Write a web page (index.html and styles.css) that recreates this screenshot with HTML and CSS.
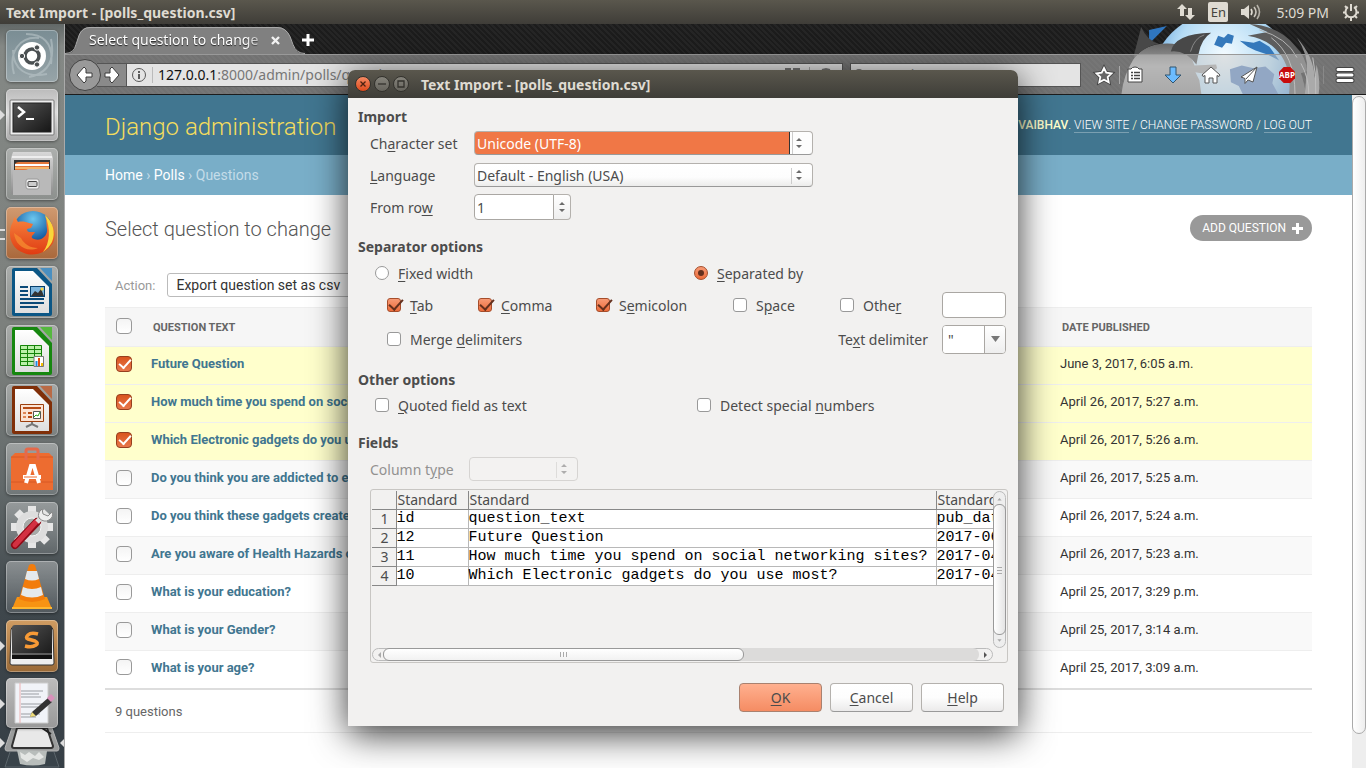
FILE: index.html
```html
<!DOCTYPE html>
<html lang="en">
<head>
<meta charset="utf-8">
<title>Text Import - [polls_question.csv]</title>
<link rel="stylesheet" href="styles.css">
</head>
<body>
<svg class="defs" width="0" height="0" aria-hidden="true">
  <defs>
    <linearGradient id="orange" x1="0" y1="0" x2="0" y2="1"><stop offset="0" stop-color="#f7853f"/><stop offset="1" stop-color="#df3b12"/></linearGradient>
    <linearGradient id="silver" x1="0" y1="0" x2="0" y2="1"><stop offset="0" stop-color="#d8d8d8"/><stop offset="1" stop-color="#8f8f8f"/></linearGradient>
    <linearGradient id="dark" x1="0" y1="0" x2="1" y2="1"><stop offset="0" stop-color="#555"/><stop offset="1" stop-color="#161616"/></linearGradient>
    <linearGradient id="paper" x1="0" y1="0" x2="0" y2="1"><stop offset="0" stop-color="#fff"/><stop offset="1" stop-color="#dedede"/></linearGradient>
    <radialGradient id="globe" cx=".5" cy=".3" r=".7"><stop offset="0" stop-color="#f4fbff"/><stop offset=".45" stop-color="#b5dcf5"/><stop offset="1" stop-color="#1e6fc0"/></radialGradient>
    <linearGradient id="fur" x1="0" y1="0" x2="0" y2="1"><stop offset="0" stop-color="#666"/><stop offset=".45" stop-color="#a5a5a5"/><stop offset="1" stop-color="#8a8a8a"/></linearGradient>
    <radialGradient id="sea" cx=".5" cy=".2" r=".8"><stop offset="0" stop-color="#6cc7ef"/><stop offset=".6" stop-color="#1c64a8"/><stop offset="1" stop-color="#0b2450"/></radialGradient>
    <symbol id="spin" viewBox="0 0 8 14"><path d="M4 2 7 5H1zM4 12 1 9h6z" fill="#6b6b6b"/></symbol>
  </defs>
</svg>

<div class="desktop">
  <header class="panel">
    <span class="panel-title">Text Import - [polls_question.csv]</span>
    <div class="indicators">
      <svg width="18" height="16" viewBox="0 0 18 16" fill="#dfdbd2"><path d="M5 0 10 5H7v7H3V5H0zM13 16 8 11h3V4h4v7h3z"/></svg>
      <span class="lang">En</span>
      <svg width="20" height="16" viewBox="0 0 20 16"><path d="M0 5h3l5-4v14l-5-4H0z" fill="#dfdbd2"/><g fill="none" stroke="#dfdbd2" stroke-width="1.600"><path d="M10 5q2 3 0 6"/><path d="M13 3q4 5 0 10" opacity=".85"/><path d="M16 1q5 7 0 14" opacity=".7"/></g></svg>
      <span class="clock">5:09 PM</span>
      <svg width="18" height="18" viewBox="0 0 18 18" fill="none" stroke="#dfdbd2"><path d="M6 4.200a5.500 5.500 0 1 0 6 0" stroke-width="2"/><path d="M9 1v7" stroke-width="2"/><path d="M3 3l2 2M15 3l-2 2M1 9.500h3M14 9.500h3M3 15l2-2M15 15l-2-2M9 15v3" stroke-width="2"/></svg>
    </div>
  </header>

  <div class="workspace">
    <nav class="launcher" aria-label="Launcher">
      <button class="tile dash" aria-label="Dash"><svg viewBox="0 0 52 52"><g fill="none" stroke="#b9c4c8" opacity=".6"><path d="M8 44C2 22 14 6 33 8M45 9c4 20-2 34-22 38M20 4c16 0 28 8 25 30M7 20c0 20 14 28 34 24" stroke-width="2"/></g><circle cx="26" cy="26" r="14" fill="#fff"/><circle cx="26" cy="26" r="7" fill="none" stroke="#4b5052" stroke-width="3.500"/><g fill="#4b5052" stroke="#fff"><circle cx="16" cy="26" r="2.700"/><circle cx="31" cy="17.500" r="2.700"/><circle cx="31" cy="34.500" r="2.700"/></g></svg></button>
      <button class="tile light run" aria-label="Terminal"><svg viewBox="0 0 52 52"><rect x="4" y="11" width="44" height="35" rx="1" fill="#eee" stroke="#777"/><rect x="7" y="14" width="38" height="29" fill="url(#dark)" stroke="#222"/><path d="m12 18 6 5-6 5" fill="none" stroke="#fff" stroke-width="2.500"/><path d="M20 30h8" stroke="#fff" stroke-width="2"/></svg></button>
      <button class="tile" aria-label="Files"><svg viewBox="0 0 52 52"><path d="M7 4h38l2 6v36H5V10z" fill="url(#silver)"/><path d="M6 9h40" stroke="#eee" stroke-width="2"/><path d="M8 12h36v12H8z" fill="#333"/><path d="M9 16q1-2 4-2h30v9H9z" fill="#e4773a"/><path d="M9 17h34" stroke="#fff" stroke-width="2"/><path d="M9 20h34" stroke="#f4b56a" stroke-width="2"/><path d="M7 22h11q3 0 4-1h23v26H7z" fill="#b9b9b9"/><rect x="20" y="31" width="13" height="10" rx="2" fill="#eee" stroke="#999"/><rect x="22" y="33.500" width="9" height="5" rx="1" fill="#ccc" stroke="#444"/></svg></button>
      <button class="tile fox multi" aria-label="Firefox"><svg viewBox="0 0 52 52"><circle cx="27" cy="24" r="20" fill="url(#sea)"/><path d="M8 10c2 1 3 3 4 5 4-1 8 0 11 1l4 1-2 4-4 1c0 4 3 3 8 3-1 3-4 3-3 6 8 5 16-2 15-9-1-8 0-8-2-13 9 7 12 18 8 27C41 46 28 50 18 46 5 42 2 29 5 19c1-3 3-5 3-9z" fill="url(#orange)"/><path d="M39 8c8 7 11 18 7 27-2 4-5 7-9 10 7-9 8-23 2-37z" fill="#f9d63a"/><path d="M8 26c1 12 12 20 24 15-8 0-14-4-17-10z" fill="#f58a2f" opacity=".8"/></svg></button>
      <button class="tile" aria-label="LibreOffice Writer"><svg viewBox="0 0 52 52"><path d="M8 2h23l15 16v30q0 2-2 2H8q-2 0-2-2V4q0-2 2-2z" fill="#0b5685"/><path d="M34 2h12v13z" fill="#4a8fc0"/><path d="M9 5h18l16 16v26H9z" fill="url(#paper)"/><path d="M14 21h8M14 25h8M14 29h8M14 33h24M14 37h24M14 41h18" stroke="#0b4a78" stroke-width="2"/><rect x="24.500" y="20.500" width="14" height="10" fill="#7cb5dd" stroke="#06406d"/><path d="m25 30 4-5 3 2 3-4 3 7z" fill="#333"/><circle cx="36" cy="23" r="1.500" fill="#ffd83c"/></svg></button>
      <button class="tile" aria-label="LibreOffice Calc"><svg viewBox="0 0 52 52"><path d="M8 2h23l15 16v30q0 2-2 2H8q-2 0-2-2V4q0-2 2-2z" fill="#16870f"/><path d="M34 2h12v13z" fill="#55b83e"/><path d="M9 5h18l16 16v26H9z" fill="url(#paper)"/><path d="M14 20h22v21H14z" fill="#baf0a8"/><path d="M14.500 20.500h21v20h-21zM14 24.500h22M14 28.500h22M14 32.500h22M14 36.500h22M21.500 20v21M28.500 20v21" fill="none" stroke="#148309"/><path d="M28 31.500h9.500v10H28z" fill="#fff" stroke="#777"/><path d="M30.500 36v5" stroke="#208be0" stroke-width="2"/><path d="M33 33v8" stroke="#e24e0d" stroke-width="2"/><path d="M36 38v3" stroke="#f4be00" stroke-width="2"/></svg></button>
      <button class="tile" aria-label="LibreOffice Impress"><svg viewBox="0 0 52 52"><path d="M8 2h23l15 16v30q0 2-2 2H8q-2 0-2-2V4q0-2 2-2z" fill="#802f08"/><path d="M34 2h12v13z" fill="#b96a45"/><path d="M9 5h18l16 16v26H9z" fill="url(#paper)"/><path d="M14.500 20.500h23v17h-23z" fill="#fbe3d4" stroke="#9c3f0d"/><path d="M17 24h18M22 29h4M22 33h4" stroke="#b64b16" stroke-width="2"/><path d="M17 29h3M17 33h3" stroke="#df8655" stroke-width="2"/><path d="M27.500 27.500h7v7h-7z" fill="#fff" stroke="#555"/><path d="m28 33 2-2 2 1 2-4" fill="none" stroke="#23a312"/><path d="M26 38v3m-6 2 6-3 6 3" fill="none" stroke="#777" stroke-width="2"/></svg></button>
      <button class="tile" aria-label="Software Center"><svg viewBox="0 0 52 52"><path d="m5 14 4-4h34l4 4v33H5z" fill="#ed6c30"/><path d="M5 14h42M5 39h42" stroke="#c94b1c" opacity=".6"/><path d="M20 17V8q0-2 2-2h8q2 0 2 2v9" fill="none" stroke="#e5694a" stroke-width="3"/><path d="m20 40 5-17h3l5 17" fill="none" stroke="#fff" stroke-width="4"/><path d="M17 34h18" stroke="#fff" stroke-width="4"/><path d="M18 34h13" stroke="#ed6c30"/></svg></button>
      <button class="tile" aria-label="System Settings"><svg viewBox="0 0 52 52"><g stroke="#e6e6e6" stroke-width="8"><path d="M26 4v42M5 25h42M11 10l30 30M41 10 11 40"/></g><circle cx="26" cy="25" r="16" fill="#ddd"/><circle cx="26" cy="25" r="9" fill="#a7aaa8" stroke="#f5f5f5"/><path d="m9 43 22-23" stroke="#8f0a16" stroke-width="8" stroke-linecap="round"/><path d="m9 43 21-23" stroke="#d33142" stroke-width="5" stroke-linecap="round"/><path d="m31 20 5-5" stroke="#ddd" stroke-width="5"/><path d="M36 7q-5 4-3 9 5 5 10 2 5-3 3-8l-4 4-5-2z" fill="#eee" stroke="#888"/></svg></button>
      <button class="tile" aria-label="VLC"><svg viewBox="0 0 52 52"><path d="M11 36h30l5 12H6z" fill="#f79313"/><path d="M6 47h40" stroke="#ffb72f" stroke-width="2"/><path d="M23 4q3-2 6 0l10 34q-13 6-26 0z" fill="#f27c0c"/><path d="m21 10-2 8q7 3 14 0l-2-8zM17 26l-2 8q11 5 22 0l-2-8q-9 4-18 0z" fill="#e5e9ec"/></svg></button>
      <button class="tile sublime run" aria-label="Sublime Text"><svg viewBox="0 0 52 52"><path d="M5 10q0-3 3-3h36q3 0 3 3l1 33q0 2-2 2H6q-2 0-2-2z" fill="#eee" stroke="#333"/><path d="M9 5h34q3 0 3 3v31H6V8q0-3 3-3z" fill="url(#dark)"/><path d="M6 35h40v4H6z" fill="#111"/><path d="M6 34h40" stroke="#999"/><path d="M32 14q-7-2-10 1-3 3 0 4l7 2q4 2 1 4-4 3-11 1" fill="none" stroke="#f79a36" stroke-width="3.500"/></svg></button>
      <button class="tile light note run" aria-label="Text Editor"><svg viewBox="0 0 52 50"><path d="M9 5h33v40H9z" fill="#f1f3f8" stroke="#ccc"/><path d="M14 5v40" stroke="#edb2b2"/><path d="M15 13h22M15 16h18M15 19h20M15 26h21M15 29h17M15 36h19M15 39h15" stroke="#9a9da3"/><path d="m26 34 16-14 4 4-16 14-6 1z" fill="#333"/><path d="m24 39 2-5 4 4z" fill="#efdc79"/><path d="m41 20 4-4 4 4-4 4z" fill="#d990bb"/></svg></button>
      <button class="tile trash run" aria-label="Workspaces and Trash"><svg viewBox="0 0 56 42"><path d="M8 0h40l7 20q0 3-2 3H3q-2 0-2-3z" fill="#9a9c9c" stroke="#b5b5b5"/><path d="M13 0h30l6 18q0 2-2 2H10q-2 0-2-2z" fill="#e8e8e8" stroke="#333" stroke-width="2"/><path d="m38 0 9 6" stroke="#222" stroke-width="2"/><path d="m6 24-5 15h54l-5-15" fill="#39434a" stroke="#5b656b"/><path d="m13 22 30 1-2 13q-12 3-25 0z" fill="#b8bdbb"/><path d="m16 24 5 3 4-3 6 4 4-4 5 5-5 3-6-2-6 4-6-4z" fill="#e4e6e4"/></svg></button>
    </nav>

    <main class="browser">
      <div class="chrome">
        <svg class="persona" viewBox="0 0 210 71" aria-hidden="true">
          <circle cx="104" cy="62" r="75" fill="url(#globe)"/>
          <path d="m28 20 18-18-18 4z" fill="#2f76c0"/>
          <path d="m98 12 6 2 4-4 6 2-2 8-6-1-4 5-8-3zM120 17l14 2 6-2 10 6 10 14-12-6-12-4-8-4z" fill="#3478bb"/>
          <path d="m110 46 12-4 12 3 12-2 9 8-2 9 6 11h-36l-4-8-8-4z" fill="#5c86c0"/>
          <path d="M12 36Q24 18 52 20q10 2 18 12l4 10 22-1 1 4-10 6-12-2 4 8 2 14H0Q2 52 12 36z" fill="url(#fur)"/>
          <path d="M13 30 20 3q6 14 18 17-14 2-25 14zM50 28q4-18 41-19-10 6-13 22l-2 10Q64 26 50 28z" fill="#484848"/>
          <path d="M70 28q4-14 14-17" fill="none" stroke="#888"/>
          <path d="m128 12 20-4-18-8q30 2 46 22 12 12 12 26l-6 2q4 12 5 21h-17q3-30-14-46-10-10-28-13z" fill="#5d5d5d"/>
          <path d="M178 14q12 18 10 34l-2 23h14q2-12-2-30l-2 14q-1-22-18-41z" fill="#8d8d8d"/>
          <path d="M140 6q28 8 38 28M152 14q24 18 24 57M182 40q8 14 8 31M194 34q4 18 3 37" fill="none" stroke="#b5b5b5"/>
        </svg>
        <div class="tabs">
          <div class="tab">
            <svg class="tab-shape" viewBox="0 0 240 30" preserveAspectRatio="none"><path d="M0 30q9 0 11-9l3-10Q17 3 25 3h187q9 0 13 9l3 9q3 9 12 9z" fill="#808080"/><path d="M0 29.500q9 0 11-9l3-9Q17 3.500 25 3.500h187q9 0 13 9l3 8q3 9 12 9" fill="none" stroke="#aaa"/></svg>
            <span class="tab-label">Select question to change</span>
            <button class="tab-close" aria-label="Close tab"><svg width="9" height="9" viewBox="0 0 9 9"><path d="m1 1 7 7M8 1 1 8" stroke="#f2f2f2" stroke-width="2.400"/></svg></button>
          </div>
          <button class="new-tab" aria-label="New tab"><svg width="14" height="14" viewBox="0 0 14 14"><path d="M7 1v12M1 7h12" stroke="#fff" stroke-width="3"/></svg></button>
        </div>
        <div class="toolbar">
          <button class="back" aria-label="Back"><svg width="18" height="18" viewBox="0 0 18 18"><path d="M8 1 1 9l7 8 2-2v-4h6V7h-6V3z" fill="#fff" stroke="#3a3a3a"/></svg></button>
          <button class="forward" aria-label="Forward"><svg width="16" height="18" viewBox="0 0 16 18"><path d="m8 1 7 8-7 8-2-2v-4H1V7h5V3z" fill="#fff" stroke="#3a3a3a"/></svg></button>
          <div class="urlbar">
            <svg width="16" height="16" viewBox="0 0 16 16"><circle cx="8" cy="8" r="6.500" fill="none" stroke="#5a5a5a"/><path d="M8 7v5M8 4v2" stroke="#5a5a5a" stroke-width="2"/></svg>
            <span class="url"><b>127.0.0.1</b>:8000/admin/polls/question/</span>
            <svg class="reader" width="56" height="16" viewBox="0 0 56 16" fill="none" stroke="#777" stroke-width="2"><path d="M1 2h6M9 2h7M38 3l4-1 4 1"/><path d="M25.500 0v14" stroke="#aaa" stroke-width="1"/></svg>
          </div>
          <label class="search"><svg width="14" height="14" viewBox="0 0 14 14"><circle cx="6" cy="6" r="4" fill="none" stroke="#777" stroke-width="2"/></svg><input type="text" placeholder="Search" aria-label="Search"></label>
          <div class="tools">
            <button aria-label="Bookmark"><svg viewBox="0 0 24 24"><path d="m12 5 2.300 4.700 5.200.7-3.800 3.600 1 5.200-4.700-2.500-4.700 2.500 1-5.200-3.800-3.600 5.200-.7z" fill="#666" stroke="#444" stroke-width="3.600"/><path d="m12 5 2.300 4.700 5.200.7-3.800 3.600 1 5.200-4.700-2.500-4.700 2.500 1-5.200-3.800-3.600 5.200-.7z" fill="#666" stroke="#fff" stroke-width="1.800"/></svg></button>
            <i class="sep"></i>
            <button aria-label="Library"><svg viewBox="0 0 24 24"><path d="M5 6h3q1-2 4-2t4 2h3v13H5z" fill="#fff" stroke="#444"/><path d="M8 9.500h2m1 0h6M8 12.500h2m1 0h6M8 15.500h2m1 0h6" stroke="#444" stroke-width="1.600"/></svg></button>
            <button aria-label="Downloads"><svg viewBox="0 0 24 24"><path d="M9 4h6v8h5l-8 8-8-8h5z" fill="#6cbcff" stroke="#31546f"/></svg></button>
            <button aria-label="Home"><svg viewBox="0 0 24 24"><path d="m12 4 9 8-1 1.500-2-1V20h-4v-5h-4v5H6v-7.500l-2 1L3 12z" fill="#fff" stroke="#555"/></svg></button>
            <button aria-label="Send"><svg viewBox="0 0 24 24"><path d="M20 4 4 14l4 1.500v5l3-3.500 5 2z" fill="#fff" stroke="#555"/><path d="M20 4 9 16" stroke="#555"/></svg></button>
            <button aria-label="Adblock Plus"><svg viewBox="0 0 24 24"><path d="M8.700 4h6.600L20 8.700v6.600L15.300 20H8.700L4 15.300V8.700z" fill="#c70d0d"/><text x="12" y="15" text-anchor="middle" class="abp">ABP</text></svg></button>
            <i class="sep end"></i>
            <button aria-label="Menu"><svg viewBox="0 0 24 24"><path d="M5 6.500h14M5 12h14M5 17.500h14" stroke="#444" stroke-width="5" stroke-linecap="round"/><path d="M5 6.500h14M5 12h14M5 17.500h14" stroke="#fff" stroke-width="3" stroke-linecap="round"/></svg></button>
          </div>
        </div>
      </div>

      <div class="viewport">
        <div class="page">
          <div class="site-header">
            <h1>Django administration</h1>
            <div class="user-tools">WELCOME, <strong>VAIBHAV</strong>. <a href="#site">VIEW SITE</a> / <a href="#password">CHANGE PASSWORD</a> / <a href="#logout">LOG OUT</a></div>
          </div>
          <div class="breadcrumbs"><a href="#home">Home</a> › <a href="#polls">Polls</a> › Questions</div>
          <div class="content">
            <div class="title-row"><h2>Select question to change</h2><a class="add" href="#add">ADD QUESTION <svg width="11" height="11" viewBox="0 0 11 11"><path d="M5.500 0v11M0 5.500h11" stroke="#fff" stroke-width="3"/></svg></a></div>
            <div class="actions"><label for="action">Action:</label><select id="action"><option>Export question set as csv</option></select></div>
            <table class="results">
              <thead><tr><th class="pick"><input type="checkbox" aria-label="Select all"></th><th>QUESTION TEXT</th><th class="date">DATE PUBLISHED</th></tr></thead>
              <tbody>
                <tr class="selected"><td><input type="checkbox" checked aria-label="Select Future Question"></td><td><a href="#q">Future Question</a></td><td>June 3, 2017, 6:05 a.m.</td></tr>
                <tr class="selected"><td><input type="checkbox" checked aria-label="Select networking question"></td><td><a href="#q">How much time you spend on social networking sites?</a></td><td>April 26, 2017, 5:27 a.m.</td></tr>
                <tr class="selected"><td><input type="checkbox" checked aria-label="Select gadgets question"></td><td><a href="#q">Which Electronic gadgets do you use most?</a></td><td>April 26, 2017, 5:26 a.m.</td></tr>
                <tr><td><input type="checkbox" aria-label="Select addiction question"></td><td><a href="#q">Do you think you are addicted to electronic gadgets?</a></td><td>April 26, 2017, 5:25 a.m.</td></tr>
                <tr><td><input type="checkbox" aria-label="Select effects question"></td><td><a href="#q">Do you think these gadgets create problems?</a></td><td>April 26, 2017, 5:24 a.m.</td></tr>
                <tr><td><input type="checkbox" aria-label="Select hazards question"></td><td><a href="#q">Are you aware of Health Hazards of gadgets?</a></td><td>April 26, 2017, 5:23 a.m.</td></tr>
                <tr><td><input type="checkbox" aria-label="Select education question"></td><td><a href="#q">What is your education?</a></td><td>April 25, 2017, 3:29 p.m.</td></tr>
                <tr><td><input type="checkbox" aria-label="Select gender question"></td><td><a href="#q">What is your Gender?</a></td><td>April 25, 2017, 3:14 a.m.</td></tr>
                <tr><td><input type="checkbox" aria-label="Select age question"></td><td><a href="#q">What is your age?</a></td><td>April 25, 2017, 3:09 a.m.</td></tr>
              </tbody>
            </table>
            <p class="paginator">9 questions</p>
          </div>
        </div>
        <div class="page-scroll"><div class="page-thumb"></div></div>
      </div>
    </main>
  </div>

  <section class="dialog" role="dialog" aria-labelledby="dlg-title">
    <header class="dlg-bar">
      <button class="win close" aria-label="Close"><svg width="8" height="8" viewBox="0 0 8 8"><path d="m1.500 1.500 5 5M6.500 1.500l-5 5" stroke="#4b2110" stroke-width="1.300"/></svg></button>
      <button class="win" aria-label="Minimize"><svg width="8" height="8" viewBox="0 0 8 8"><path d="M0 4h8" stroke="#33322d" stroke-width="1.300"/></svg></button>
      <button class="win" aria-label="Maximize"><svg width="8" height="8" viewBox="0 0 8 8"><path d="M1 1h6v6H1z" fill="none" stroke="#33322d" stroke-width="1.300"/></svg></button>
      <h2 id="dlg-title">Text Import - [polls_question.csv]</h2>
    </header>
    <form class="dlg-body">
      <section>
        <h3>Import</h3>
        <div class="rows">
          <div class="row"><label class="field" for="charset">Ch<u>a</u>racter set</label><span class="combo wide"><select id="charset" class="focused"><option>Unicode (UTF-8)</option></select><svg width="8" height="14"><use href="#spin"/></svg></span></div>
          <div class="row"><label class="field" for="language"><u>L</u>anguage</label><span class="combo wide"><select id="language"><option>Default - English (USA)</option></select><svg width="8" height="14"><use href="#spin"/></svg></span></div>
          <div class="row"><label class="field" for="fromrow">From ro<u>w</u></label><span class="spinner"><input id="fromrow" type="text" value="1"><button type="button" aria-label="Change row"><svg width="8" height="14"><use href="#spin"/></svg></button></span></div>
        </div>
      </section>
      <section>
        <h3>Separator options</h3>
        <div class="rows">
          <div class="row modes"><label><input type="radio" name="mode"><span><u>F</u>ixed width</span></label><label><input type="radio" name="mode" checked><span><u>S</u>eparated by</span></label></div>
          <div class="row seps">
            <label><input type="checkbox" checked><span><u>T</u>ab</span></label>
            <label><input type="checkbox" checked><span><u>C</u>omma</span></label>
            <label><input type="checkbox" checked><span>S<u>e</u>micolon</span></label>
            <label><input type="checkbox"><span>S<u>p</u>ace</span></label>
            <label><input type="checkbox"><span>Othe<u>r</u></span></label>
            <input class="other" type="text" aria-label="Other separator">
          </div>
          <div class="row delim">
            <label><input type="checkbox"><span>Merge <u>d</u>elimiters</span></label>
            <label class="delim-label" for="delim">Te<u>x</u>t delimiter</label>
            <span class="delim-box"><input id="delim" type="text" value="&quot;"><button type="button" aria-label="Choose delimiter"><svg width="9" height="6" viewBox="0 0 9 6"><path d="M0 0h9L4.500 6z" fill="#777"/></svg></button></span>
          </div>
        </div>
      </section>
      <section>
        <h3>Other options</h3>
        <div class="row others"><label><input type="checkbox"><span><u>Q</u>uoted field as text</span></label><label><input type="checkbox"><span>Detect special <u>n</u>umbers</span></label></div>
      </section>
      <section>
        <h3>Fields</h3>
        <div class="row coltype"><label for="coltype">Column t<u>y</u>pe</label><span class="combo disabled"><select id="coltype" disabled><option></option></select><svg width="8" height="14"><use href="#spin"/></svg></span></div>
        <div class="preview">
          <div class="preview-clip">
            <table>
              <thead><tr><th></th><th>Standard</th><th>Standard</th><th>Standard</th></tr></thead>
              <tbody>
                <tr><th>1</th><td>id</td><td>question_text</td><td>pub_date</td></tr>
                <tr><th>2</th><td>12</td><td>Future Question</td><td>2017-06-03</td></tr>
                <tr><th>3</th><td>11</td><td>How much time you spend on social networking sites?</td><td>2017-04-26</td></tr>
                <tr><th>4</th><td>10</td><td>Which Electronic gadgets do you use most?</td><td>2017-04-26</td></tr>
              </tbody>
            </table>
          </div>
          <div class="vbar"><svg width="13" height="12" viewBox="0 0 13 12"><path d="m4 9 2.500-3L9 9z" fill="#aaa"/></svg><div class="vthumb"><svg width="5" height="8" viewBox="0 0 5 8"><path d="M0 1.500h5M0 4.500h5M0 7.500h5" stroke="#aaa"/></svg></div><svg width="13" height="12" viewBox="0 0 13 12"><path d="m4 4 2.500 3L9 4z" fill="#aaa"/></svg></div>
          <div class="hbar"><svg width="10" height="12" viewBox="0 0 10 12"><path d="m8 3-3 3 3 3z" fill="#aaa"/></svg><div class="htrack"><div class="hthumb"><svg width="8" height="5" viewBox="0 0 8 5"><path d="M.5 0v5M3.500 0v5M6.500 0v5" stroke="#aaa"/></svg></div></div><svg width="13" height="12" viewBox="0 0 13 12"><path d="m5 3 3 3-3 3z" fill="#555"/></svg></div>
        </div>
      </section>
      <footer class="buttons"><button type="button" class="ok"><u>O</u>K</button><button type="button"><u>C</u>ancel</button><button type="button"><u>H</u>elp</button></footer>
    </form>
  </section>
</div>
</body>
</html>
```

FILE: styles.css
```css
* { box-sizing: border-box; }
html, body { height: 100%; }
body { margin: 0; overflow: hidden; font-family: "Noto Sans", sans-serif; font-size: 14px; color: #4c4c4c; }
button, input, select { font: inherit; color: inherit; margin: 0; padding: 0; }
button { border: 0; background: none; }
h1, h2, h3, p { margin: 0; }
svg { display: block; flex: none; }
u { text-underline-offset: 2px; }
.defs { position: absolute; }

.desktop { position: relative; height: 100vh; display: flex; flex-direction: column; }

/* top panel */
.panel { height: 24px; flex: none; display: flex; justify-content: space-between; align-items: center; padding: 0 6px; background: linear-gradient(#5a574d, #3f3d38); color: #dfdbd2; }
.panel-title { font-weight: 700; font-size: 14px; }
.indicators { display: flex; align-items: center; gap: 13px; }
.lang { width: 20px; height: 20px; border-radius: 2px; background: #dfdbd2; color: #45433d; font-size: 13px; line-height: 20px; text-align: center; }
.clock { margin-left: 2px; }
.workspace { flex: 1; min-height: 0; display: flex; }

/* launcher */
.launcher { width: 65px; flex: none; padding: 6px 6px 0; display: flex; flex-direction: column; gap: 7px; overflow: hidden; background: linear-gradient(#626867, #848885 3%, #7b7f7c 45%, #62696a 62%, #3f474c 78%, #363f46); border-right: 1px solid #aaa; }
.tile { position: relative; width: 52px; height: 52px; flex: none; border-radius: 5px; background: linear-gradient(rgba(255,255,255,.35), rgba(255,255,255,.1)); box-shadow: inset 0 0 0 1px rgba(255,255,255,.3), 0 1px 3px rgba(0,0,0,.4); }
.tile svg { width: 100%; height: 100%; }
.dash { background: linear-gradient(#7a8d94, #97a4a8); }
.light { background: linear-gradient(#bbb, #ddd 45%, #aaa); }
.fox { background: linear-gradient(#d19a70, #a9683b); }
.sublime { background: linear-gradient(#d09c62, #9a6a37); }
.run::before, .multi::before { content: ""; position: absolute; left: -6px; top: 21px; border: 5px solid transparent; border-left-color: #ddd; border-right: 0; }
.multi::before { top: 22px; width: 5px; height: 7px; border: solid #ddd; border-width: 2px 0; }
.note { height: 50px; margin-top: -1px; z-index: 1; background: linear-gradient(#bcbcbc, #999); }
.trash { width: 56px; height: 42px; margin: -7px 0 0 -2px; background: none; box-shadow: none; }
.trash::before { left: -4px; top: 10px; }
.trash::after { content: ""; position: absolute; right: -5px; top: 10px; border: 5px solid transparent; border-right-color: #ddd; border-left: 0; }

/* browser chrome */
.browser { flex: 1; min-width: 0; display: flex; flex-direction: column; }
.chrome { position: relative; flex: none; background: repeating-linear-gradient(45deg, #1c1c1c 0 2px, #252525 2px 4px); border-bottom: 1px solid #1c1c1c; }
.persona { position: absolute; right: 36px; top: 0; width: 210px; height: 70px; }
.tabs { position: relative; height: 30px; display: flex; align-items: center; gap: 10px; }
.tab { position: relative; width: 226px; height: 30px; display: flex; align-items: center; padding-left: 24px; color: #fff; text-shadow: 0 1px 1px #222; }
.tab-shape { position: absolute; left: 0; top: 0; width: 240px; height: 30px; }
.tab-label { position: relative; width: 172px; overflow: hidden; white-space: nowrap; font-size: 14px; mask-image: linear-gradient(90deg, #000 90%, rgba(0,0,0,.4)); }
.tab-close { position: relative; margin: 2px 0 0 10px; }
.new-tab { position: relative; margin: 2px 0 0; }
.toolbar { position: relative; height: 40px; display: flex; align-items: center; padding-left: 4px; background: rgba(200,200,200,.5); border-top: 1px solid #999; }
.back { position: relative; z-index: 1; width: 32px; height: 32px; border: 1px solid #444; border-radius: 50%; background: #999; display: grid; place-items: center; }
.forward { width: 29px; height: 24px; margin-left: -4px; border: 1px solid #555; border-width: 1px 0; background: #8a8a8a; display: grid; place-items: center; }
.urlbar { flex: 1; min-width: 0; height: 24px; display: flex; align-items: center; gap: 5px; padding: 0 2px 0 4px; background: #e4e4e4; border: 1px solid #555; color: #777; }
.url { flex: 1; min-width: 0; padding-left: 5px; white-space: nowrap; line-height: 16px; border-left: 1px solid #bbb; }
.url b { font-weight: 400; color: #111; }
.search { width: 231px; height: 24px; margin-left: 7px; display: flex; align-items: center; gap: 8px; padding: 0 2px; background: #e4e4e4; border: 1px solid #555; }
.search input { min-width: 0; flex: 1; border: 0; background: none; }
.search input::placeholder { color: #888; }
.tools { display: flex; align-items: center; gap: 14px; padding: 0 9px 0 11px; }
.tools button, .tools svg { width: 24px; height: 24px; }
.sep { width: 1px; height: 18px; margin: 0 -11px; background: #aaa; }
.tools .end { margin: 0 -5px 0 10px; opacity: .4; }
.abp { font: 700 8px "Open Sans", sans-serif; fill: #fff; }

/* page */
.viewport { flex: 1; min-height: 0; display: flex; background: #fff; }
.page { flex: 1; min-width: 0; font-family: Roboto, sans-serif; font-size: 13px; color: #333; }
.site-header { height: 60px; padding: 0 40px; display: flex; align-items: center; justify-content: space-between; background: #417690; }
.site-header h1 { font-size: 24px; font-weight: 300; color: #f5dd5d; margin-top: 3px; }
.user-tools { font-size: 12px; color: #ffc; font-weight: 300; }
.user-tools strong { font-weight: 500; }
.user-tools a { color: #fff; text-decoration: none; border-bottom: 1px solid rgba(255,255,255,.3); }
.breadcrumbs { height: 40px; padding: 0 40px; line-height: 40px; font-size: 14px; background: #79aec8; color: #c4dce8; }
.breadcrumbs a { color: #fff; text-decoration: none; }
.content { padding: 20px 40px; }
.title-row { display: flex; align-items: center; justify-content: space-between; height: 26px; }
.title-row h2 { font-size: 20px; font-weight: 300; color: #555; margin-top: 2px; }
.add { height: 26px; display: flex; align-items: center; gap: 6px; padding: 0 9px 0 12px; border-radius: 13px; background: #999; color: #fff; font-size: 12px; text-decoration: none; }
.actions { display: flex; align-items: center; height: 26px; margin: 31px 0 9px; padding-left: 10px; color: #999; }
.actions select { appearance: none; height: 24px; width: 200px; margin-left: 12px; padding: 0 8px; border: 1px solid #bbb; border-radius: 3px; background: #fff; color: #333; font-size: 14px; }
.results { width: 100%; border-collapse: collapse; table-layout: fixed; border-bottom: 2px solid #ddd; }
.results th { height: 39px; padding: 1px 10px 0; text-align: left; font-size: 11px; font-weight: 700; color: #666; background: #f6f6f6; border: solid #eee; border-width: 1px 0; }
.results td { height: 38px; padding: 0 8px 4px; border-bottom: 1px solid #eee; white-space: nowrap; overflow: hidden; }
.results .pick { width: 38px; }
.results .date { width: 260px; }
.results a { font-weight: 700; color: #417690; text-decoration: none; }
.results tbody tr:nth-child(even) { background: #f9f9f9; }
.results tbody tr.selected { background: #ffc; }
.results input { appearance: none; display: block; width: 16px; height: 16px; margin: 0 3px; border: 1px solid #999; border-radius: 4px; background: linear-gradient(#f4f4f4, #fff); }
.results th input { margin: -4px 1px 0; }
.results input:checked { border-color: #96401f; background: linear-gradient(#d9551f, #e8774b); }
.results input:checked::after { content: ""; display: block; width: 10px; height: 5px; margin: 2px; border: solid #fff; border-width: 0 0 2px 2px; transform: rotate(-48deg); }
.paginator { padding: 0 10px; height: 43px; line-height: 43px; border-bottom: 1px solid #eee; color: #666; }
.page-scroll { width: 14px; flex: none; background: #eee; padding-top: 1px; }
.page-thumb { height: 95%; border: 1px solid #aaa; border-radius: 7px; background: linear-gradient(90deg, #fff, #eee); }

/* dialog */
.dialog { position: absolute; left: 348px; top: 70px; width: 670px; border-radius: 7px 7px 0 0; background: #f2f1f0; box-shadow: 0 8px 36px rgba(0,0,0,.8); }
.dlg-bar { height: 28px; display: flex; align-items: center; gap: 3px; padding-left: 7px; border-radius: 7px 7px 0 0; background: linear-gradient(#5a574d, #3e3d38); color: #dfdbd2; }
.dlg-bar h2 { font-size: 14px; font-weight: 700; margin-left: 9px; }
.win { width: 16px; height: 16px; border: 1px solid #33322d; border-radius: 50%; background: linear-gradient(#85837b, #66645d); display: grid; place-items: center; }
.win.close { background: linear-gradient(#f58a63, #dd4a1c); }
.dlg-body { padding: 9px 10px 14px; display: flex; flex-direction: column; gap: 16px; }
.dlg-body section:first-child { padding-bottom: 1px; }
.dlg-body h3 { height: 20px; line-height: 20px; margin-bottom: 3px; font-size: 14px; font-weight: 700; }
.rows { display: flex; flex-direction: column; gap: 6px; }
.row { height: 26px; display: flex; align-items: center; padding-left: 12px; }
.field { width: 104px; }
.row label:has(> input) { display: flex; align-items: center; gap: 9px; white-space: nowrap; }
.combo { display: grid; grid-template-columns: 1fr 18px; align-items: center; }
.combo.wide { width: 339px; }
.combo select { grid-area: 1 / 1 / 2 / 3; appearance: none; height: 24px; padding: 0 2px; border: 1px solid #b4b1ad; border-bottom-color: #999; border-radius: 4px; background: linear-gradient(90deg, transparent calc(100% - 21px), #ccc 0 calc(100% - 20px), transparent 0) 0 4px / 100% 16px no-repeat, linear-gradient(#fff, #fdfdfd 60%, #ececeb); font-size: 14px; }
.combo svg { grid-area: 1 / 2; pointer-events: none; }
.combo select.focused { color: #fff; background: linear-gradient(90deg, #f07746 0 314px, #333 314px 315px, #fdfdfd 315px 317px, #ccc 317px 318px, #fdfdfd 318px); }
.spinner { display: flex; width: 97px; }
.spinner input { width: 80px; height: 26px; padding: 0 2px; border: 1px solid #aaa7a3; border-radius: 4px 0 0 4px; background: #fff; }
.spinner button { flex: 1; height: 26px; border: 1px solid #b4b1ad; border-left: 0; border-radius: 0 4px 4px 0; background: linear-gradient(#fff, #eee); display: grid; place-items: center; }
.dlg-body input[type=checkbox], .dlg-body input[type=radio] { appearance: none; width: 14px; height: 14px; flex: none; border: 1px solid #999; border-radius: 3px; background: #fff; display: grid; place-items: center; }
.dlg-body input[type=radio] { border-radius: 50%; margin-left: 5px; }
.dlg-body input[type]:checked { border-color: #a64d2a; background: linear-gradient(#f79a75, #ed6c3a); }
.dlg-body input[type=checkbox]:checked::after { content: ""; width: 12px; height: 6px; margin: -4px -3px 0 0; border: solid #64301d; border-width: 0 0 2px 2px; transform: rotate(-48deg); }
.dlg-body input[type=radio]:checked::after { content: ""; width: 6px; height: 6px; border-radius: 50%; background: #64301d; }
.modes { display: grid; grid-template-columns: 319px 1fr; }
.seps { display: grid; grid-template-columns: 91px 118px 137px 107px 102px 64px; padding-left: 29px; }
.other { height: 26px; width: 64px; border: 1px solid #aaa7a3; border-radius: 4px; background: #fff; }
.delim { height: 30px; padding: 0 2px 0 29px; }
.delim-label { margin-left: auto; margin-right: 14px; }
.delim-box { display: flex; width: 64px; height: 29px; border: 1px solid #aaa7a3; border-radius: 4px; background: #fff; overflow: hidden; }
.delim-box input { width: 41px; padding: 0 5px; border: 0; }
.delim-box button { flex: 1; display: grid; place-items: center; border-left: 1px solid #aaa7a3; background: linear-gradient(#fff, #eee); }
.others { height: 24px; padding-left: 17px; display: grid; grid-template-columns: 322px 1fr; }
.coltype { gap: 15px; color: #929190; }
.combo.disabled { width: 109px; }
.combo.disabled svg { opacity: .5; }
.combo.disabled select { border-color: #cbc9c6; background: linear-gradient(90deg, transparent calc(100% - 21px), #d5d4d2 0 calc(100% - 20px), transparent 0) 0 4px / 100% 16px no-repeat, #f4f3f2; }

.preview { display: grid; grid-template-columns: 1fr 13px; grid-template-rows: 157px 13px; margin: 7px 0 0 12px; width: 638px; padding: 1px; border: 1px solid #c8c6c3; border-radius: 3px; }
.preview-clip { overflow: hidden; }
.preview table { width: 686px; border-collapse: collapse; table-layout: fixed; }
.preview th, .preview td { height: 19px; padding: 0; text-align: left; line-height: 18px; white-space: nowrap; font-weight: 400; }
.preview thead th { height: 18px; line-height: 17px; font-size: 14px; padding-left: 1px; border-right: 1px solid #888; border-bottom: 1px solid #888; color: #4c4c4c; }
.preview thead th:nth-child(1) { width: 24px; }
.preview thead th:nth-child(2) { width: 72px; }
.preview thead th:nth-child(3) { width: 468px; }
.preview tbody th { padding-right: 7px; text-align: right; border-bottom: 1px solid #888; border-right: 1px solid #888; }
.preview td { font-family: "Liberation Mono", monospace; font-size: 15px; color: #000; background: #fff; border-right: 1px solid #b8b8b8; border-bottom: 1px solid #b8b8b8; }
.vbar { display: flex; flex-direction: column; border: 1px solid #bbb; border-radius: 7px; background: #eee; }
.vbar > svg { width: 11px; }
.vthumb { flex: 1; display: grid; place-items: center; border: 1px solid #999; border-radius: 6px; margin: 0 -1px; background: linear-gradient(90deg, #fff, #e4e4e4); }
.hbar { display: flex; align-items: center; border: 1px solid #bbb; border-radius: 7px; }
.htrack { flex: 1; background: #dcdbda; border-radius: 6px; }
.hthumb { width: 361px; height: 13px; display: grid; place-items: center; border: 1px solid #999; border-radius: 6px; background: linear-gradient(#fff, #f2f2f2); }
.buttons { display: flex; justify-content: flex-end; gap: 8px; margin-top: 4px; padding-right: 4px; }
.buttons button { width: 83px; height: 29px; border: 1px solid #b4b1ad; border-bottom-color: #999; border-radius: 4px; background: linear-gradient(#fff, #fdfdfd 50%, #ebeaea); }
.buttons .ok { border-color: #a9816f; background: linear-gradient(#ffb08f, #f58c63); }
```
